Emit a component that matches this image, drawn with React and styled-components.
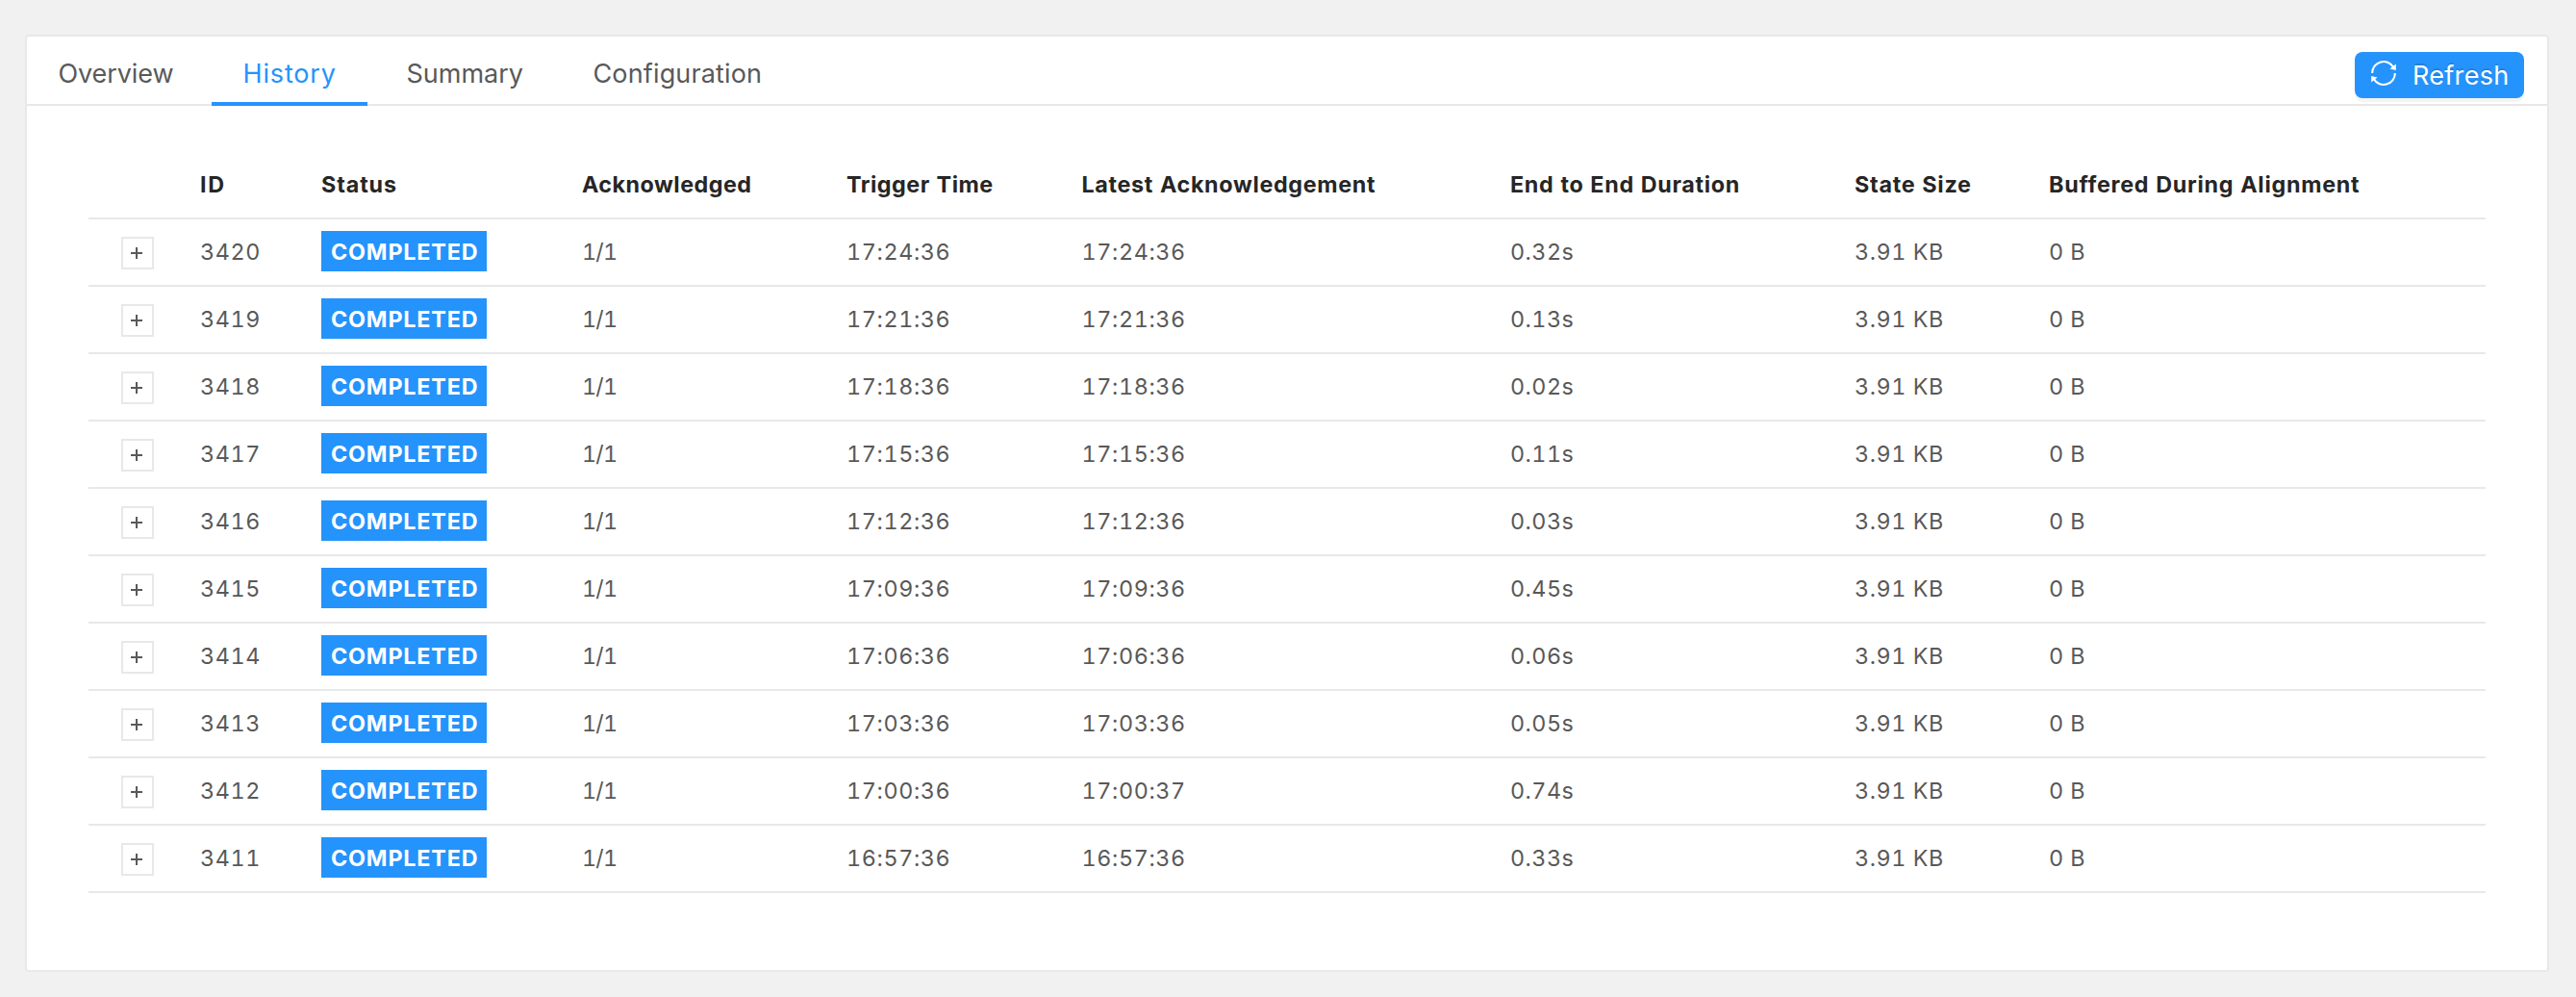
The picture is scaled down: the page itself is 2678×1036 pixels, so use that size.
import React from 'react';
import styled, { createGlobalStyle } from 'styled-components';

const GlobalStyle = createGlobalStyle`
  *, *::before, *::after { box-sizing: border-box; }
  body {
    margin: 0;
    background: #f1f1f1;
    color: #595959;
    font-family: Inter, "Liberation Sans", sans-serif;
    font-variant-numeric: tabular-nums;
    -webkit-font-smoothing: antialiased;
  }
`;

const Page = styled.main`
  height: 1036px;
  padding: 36px 28px 26px 26px;
`;

const Card = styled.section`
  height: 100%;
  background: #fff;
  border: 2px solid #e8e8e8;
  border-radius: 4px;
`;

const TabBar = styled.nav`
  display: flex;
  align-items: flex-start;
  gap: 8px;
  height: 72px;
  padding-right: 24px;
  box-shadow: inset 0 -2px 0 #e8e8e8;
`;

const Tab = styled.button`
  width: ${(p) => p.$width}px;
  height: 72px;
  padding: 9px 0 0 32.5px;
  border: 0;
  border-bottom: 4px solid ${(p) => (p.$active ? '#2593fc' : 'transparent')};
  background: none;
  color: ${(p) => (p.$active ? '#2593fc' : '#595959')};
  font-family: inherit;
  font-size: 27px;
  letter-spacing: ${(p) => p.$spacing}px;
  line-height: 59px;
  text-align: left;
  white-space: nowrap;
`;

const RefreshButton = styled.button`
  display: flex;
  align-items: center;
  width: 176px;
  height: 48px;
  margin: 16px 0 0 auto;
  padding: 0 0 0 16px;
  border: 0;
  border-radius: 8px;
  background: #2593fc;
  box-shadow: 0 4px 0 rgba(0, 0, 0, 0.045);
  color: #fff;
  font-family: inherit;
  font-size: 27px;
  letter-spacing: 0.3px;
  line-height: 48px;
  text-shadow: 0 -2px 0 rgba(0, 0, 0, 0.12);

  svg { flex: none; margin: -4px 16px 0 0; }
`;

const ButtonLabel = styled.span`
  padding-top: 1px;
`;

const TableArea = styled.div`
  padding: 48px 64px;
`;

const Table = styled.table`
  width: 2492px;
  table-layout: fixed;
  border-collapse: separate;
  border-spacing: 0;
  text-align: left;
`;

const HeadCell = styled.th`
  height: 70px;
  padding: 0 16px 2px;
  border-bottom: 2px solid #e8e8e8;
  color: #262626;
  font-size: 23.3px;
  font-weight: 700;
  letter-spacing: ${(p) => p.$spacing}px;
  white-space: nowrap;
`;

const Cell = styled.td`
  height: 70px;
  padding: 0 16px 2px;
  border-bottom: 2px solid #e8e8e8;
  font-size: 23.3px;
  letter-spacing: ${(p) => p.$spacing ?? 0.65}px;
  white-space: nowrap;
`;

const ExpandButton = styled.button`
  display: grid;
  place-items: center;
  width: 34px;
  height: 34px;
  margin: 4px 0 0 18px;
  padding: 0 2px 0 0;
  border: 2px solid #e8e8e8;
  background: #fff;
  color: #595959;
`;

const Badge = styled.span`
  display: block;
  width: 172px;
  height: 42px;
  padding: 1px 0 0 10px;
  background: #2593fc;
  color: #fff;
  font-weight: 700;
  line-height: 42px;
  letter-spacing: 0.84px;
`;

const tabs = [
  { label: 'Overview', width: 184, spacing: -0.1 },
  { label: 'History', width: 162, spacing: 0.85, active: true },
  { label: 'Summary', width: 186, spacing: 0 },
  { label: 'Configuration', width: 240, spacing: 0.15 },
];

const columns = [
  { label: '', width: 100, spacing: 0 },
  { label: 'ID', width: 126, spacing: 1.6 },
  { label: 'Status', width: 271, spacing: 0.9 },
  { label: 'Acknowledged', width: 275, spacing: 0.5 },
  { label: 'Trigger Time', width: 244.5, spacing: 0.54 },
  { label: 'Latest Acknowledgement', width: 445.5, spacing: 0.68 },
  { label: 'End to End Duration', width: 358, spacing: 0.7 },
  { label: 'State Size', width: 202, spacing: 0.75 },
  { label: 'Buffered During Alignment', width: 470, spacing: 0.74 },
];

const checkpoints = [
  [3420, '17:24:36', '17:24:36', '0.32s'],
  [3419, '17:21:36', '17:21:36', '0.13s'],
  [3418, '17:18:36', '17:18:36', '0.02s'],
  [3417, '17:15:36', '17:15:36', '0.11s'],
  [3416, '17:12:36', '17:12:36', '0.03s'],
  [3415, '17:09:36', '17:09:36', '0.45s'],
  [3414, '17:06:36', '17:06:36', '0.06s'],
  [3413, '17:03:36', '17:03:36', '0.05s'],
  [3412, '17:00:36', '17:00:37', '0.74s'],
  [3411, '16:57:36', '16:57:36', '0.33s'],
];

function PlusIcon() {
  return (
    <svg width="12" height="12" viewBox="0 0 12 12" aria-hidden="true">
      <path d="M0 6H12M6 0V12" stroke="currentColor" strokeWidth="2" />
    </svg>
  );
}

function SyncIcon() {
  return (
    <svg width="28" height="28" viewBox="0 0 28 28" aria-hidden="true">
      <path
        d="M2.1 14A11.9 11.9 0 0 1 24.4 8.2M25.9 14A11.9 11.9 0 0 1 3.6 19.8"
        fill="none"
        stroke="currentColor"
        strokeWidth="2.1"
      />
      <path d="M26.8 4.6V11.1L20.4 9.6ZM1.2 23.4V16.9L7.6 18.4Z" fill="currentColor" />
    </svg>
  );
}

export default function App() {
  return (
    <>
      <GlobalStyle />
      <Page>
        <Card>
          <TabBar>
            {tabs.map((t) => (
              <Tab key={t.label} $width={t.width} $active={t.active} $spacing={t.spacing}>{t.label}</Tab>
            ))}
            <RefreshButton><SyncIcon /><ButtonLabel>Refresh</ButtonLabel></RefreshButton>
          </TabBar>
          <TableArea>
            <Table>
              <colgroup>
                {columns.map((c) => <col key={c.label} style={{ width: c.width }} />)}
              </colgroup>
              <thead>
                <tr>{columns.map((c) => <HeadCell key={c.label} $spacing={c.spacing}>{c.label}</HeadCell>)}</tr>
              </thead>
              <tbody>
                {checkpoints.map(([id, trigger, latest, duration]) => (
                  <tr key={id}>
                    <Cell><ExpandButton aria-label="Expand row"><PlusIcon /></ExpandButton></Cell>
                    <Cell>{id}</Cell>
                    <Cell><Badge>COMPLETED</Badge></Cell>
                    <Cell $spacing={-0.8}>1/1</Cell>
                    <Cell>{trigger}</Cell>
                    <Cell>{latest}</Cell>
                    <Cell $spacing={0.5}>{duration}</Cell>
                    <Cell $spacing={0.6}>3.91 KB</Cell>
                    <Cell $spacing={0.4}>0 B</Cell>
                  </tr>
                ))}
              </tbody>
            </Table>
          </TableArea>
        </Card>
      </Page>
    </>
  );
}
